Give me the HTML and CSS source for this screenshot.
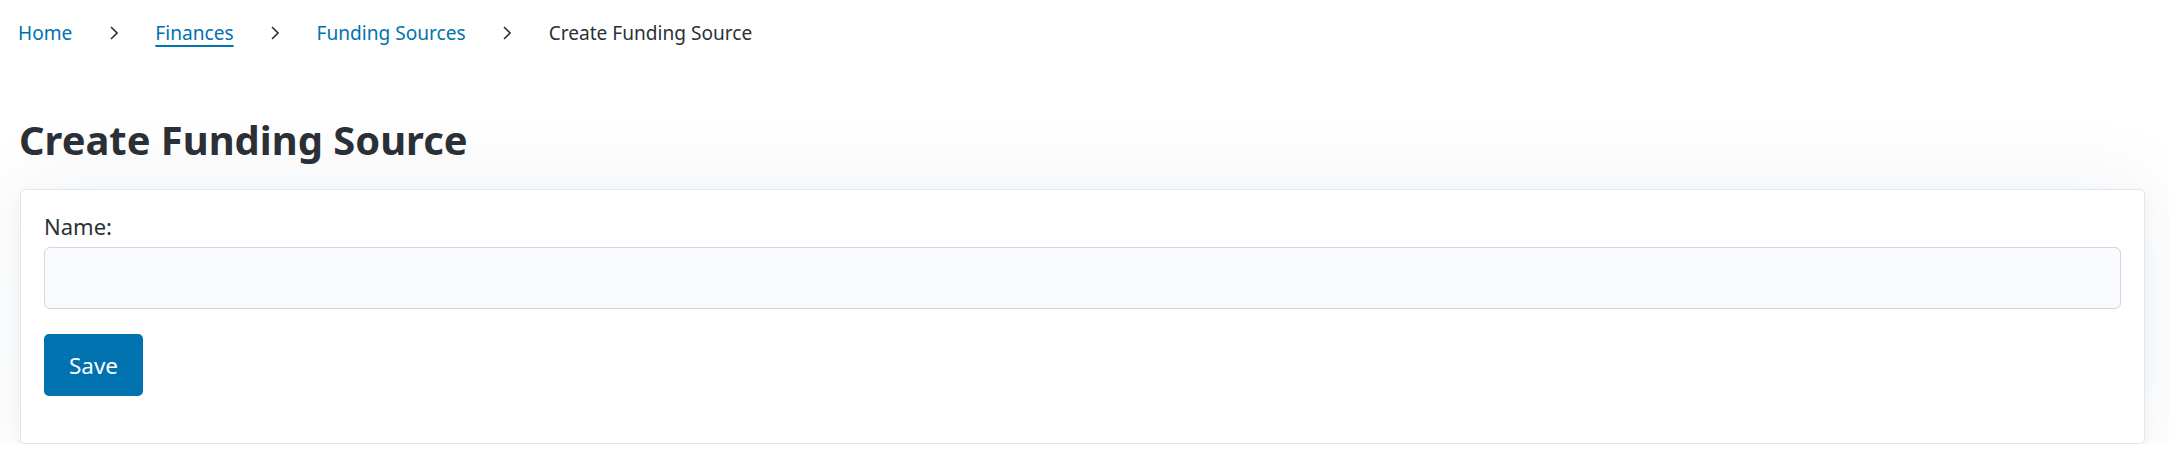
FILE: index.html
```html
<!DOCTYPE html>
<html lang="en">
<head>
<meta charset="utf-8">
<title>Create Funding Source</title>
<link rel="stylesheet" href="styles.css">
</head>
<body>
<nav class="breadcrumb">
  <a class="crumb" href="#">Home</a>
  <svg class="sep" viewBox="0 0 8 14" width="8" height="14"><path d="M1 1l6 6-6 6" fill="none" stroke="#2f3338" stroke-width="1.6"/></svg>
  <a class="crumb active" href="#">Finances</a>
  <svg class="sep" viewBox="0 0 8 14" width="8" height="14"><path d="M1 1l6 6-6 6" fill="none" stroke="#2f3338" stroke-width="1.6"/></svg>
  <a class="crumb" href="#">Funding Sources</a>
  <svg class="sep" viewBox="0 0 8 14" width="8" height="14"><path d="M1 1l6 6-6 6" fill="none" stroke="#2f3338" stroke-width="1.6"/></svg>
  <span class="crumb current">Create Funding Source</span>
</nav>
<main class="page">
  <h1 class="title">Create Funding Source</h1>
  <section class="card">
    <form class="form">
      <label class="label" for="name">Name:</label>
      <input class="input" id="name" type="text">
      <button class="btn" type="button">Save</button>
    </form>
  </section>
</main>
</body>
</html>
```
FILE: styles.css
```css
html, body {
  margin: 0;
  padding: 0;
  background: #ffffff;
  font-family: "Noto Sans", "Open Sans", sans-serif;
  color: #2d3136;
}

.breadcrumb {
  display: flex;
  align-items: center;
  gap: 37.5px;
  height: 66px;
  padding: 0 0 0 18px;
  font-size: 19.1px;
}

.crumb {
  color: #0072b0;
  text-decoration: none;
  line-height: 26px;
}

.crumb.active {
  text-decoration: underline;
  text-decoration-thickness: 2px;
  text-underline-offset: 5px;
}

.crumb.current {
  color: #2d3136;
}

.sep {
  display: block;
}

.page {
  padding: 0 24px 0 20px;
}

.title {
  margin: 49px 0 0 -1px;
  font-size: 39.9px;
  line-height: 50px;
  font-weight: 700;
  color: #2b2f36;
}

.card {
  margin-top: 24px;
  background: #ffffff;
  border: 1px solid #e3e5ec;
  border-radius: 5px;
  box-shadow: 0 0 90px rgba(30, 40, 90, 0.07), 0 4px 14px rgba(30, 40, 90, 0.04);
  padding: 21px 23px 47px 23px;
}

.form {
  display: flex;
  flex-direction: column;
  align-items: flex-start;
}

.label {
  font-size: 22px;
  line-height: 30px;
  margin-bottom: 6px;
  color: #2d3136;
}

.input {
  box-sizing: border-box;
  width: 100%;
  height: 62px;
  margin: 0;
  background: #f9fafb;
  border: 1px solid #d2d5e3;
  border-radius: 6px;
  font: inherit;
}

.btn {
  margin-top: 25px;
  width: 99px;
  height: 62px;
  background: #0072b0;
  color: #ffffff;
  border: none;
  border-radius: 5px;
  font-family: inherit;
  font-size: 22.5px;
  padding: 0;
}
```
